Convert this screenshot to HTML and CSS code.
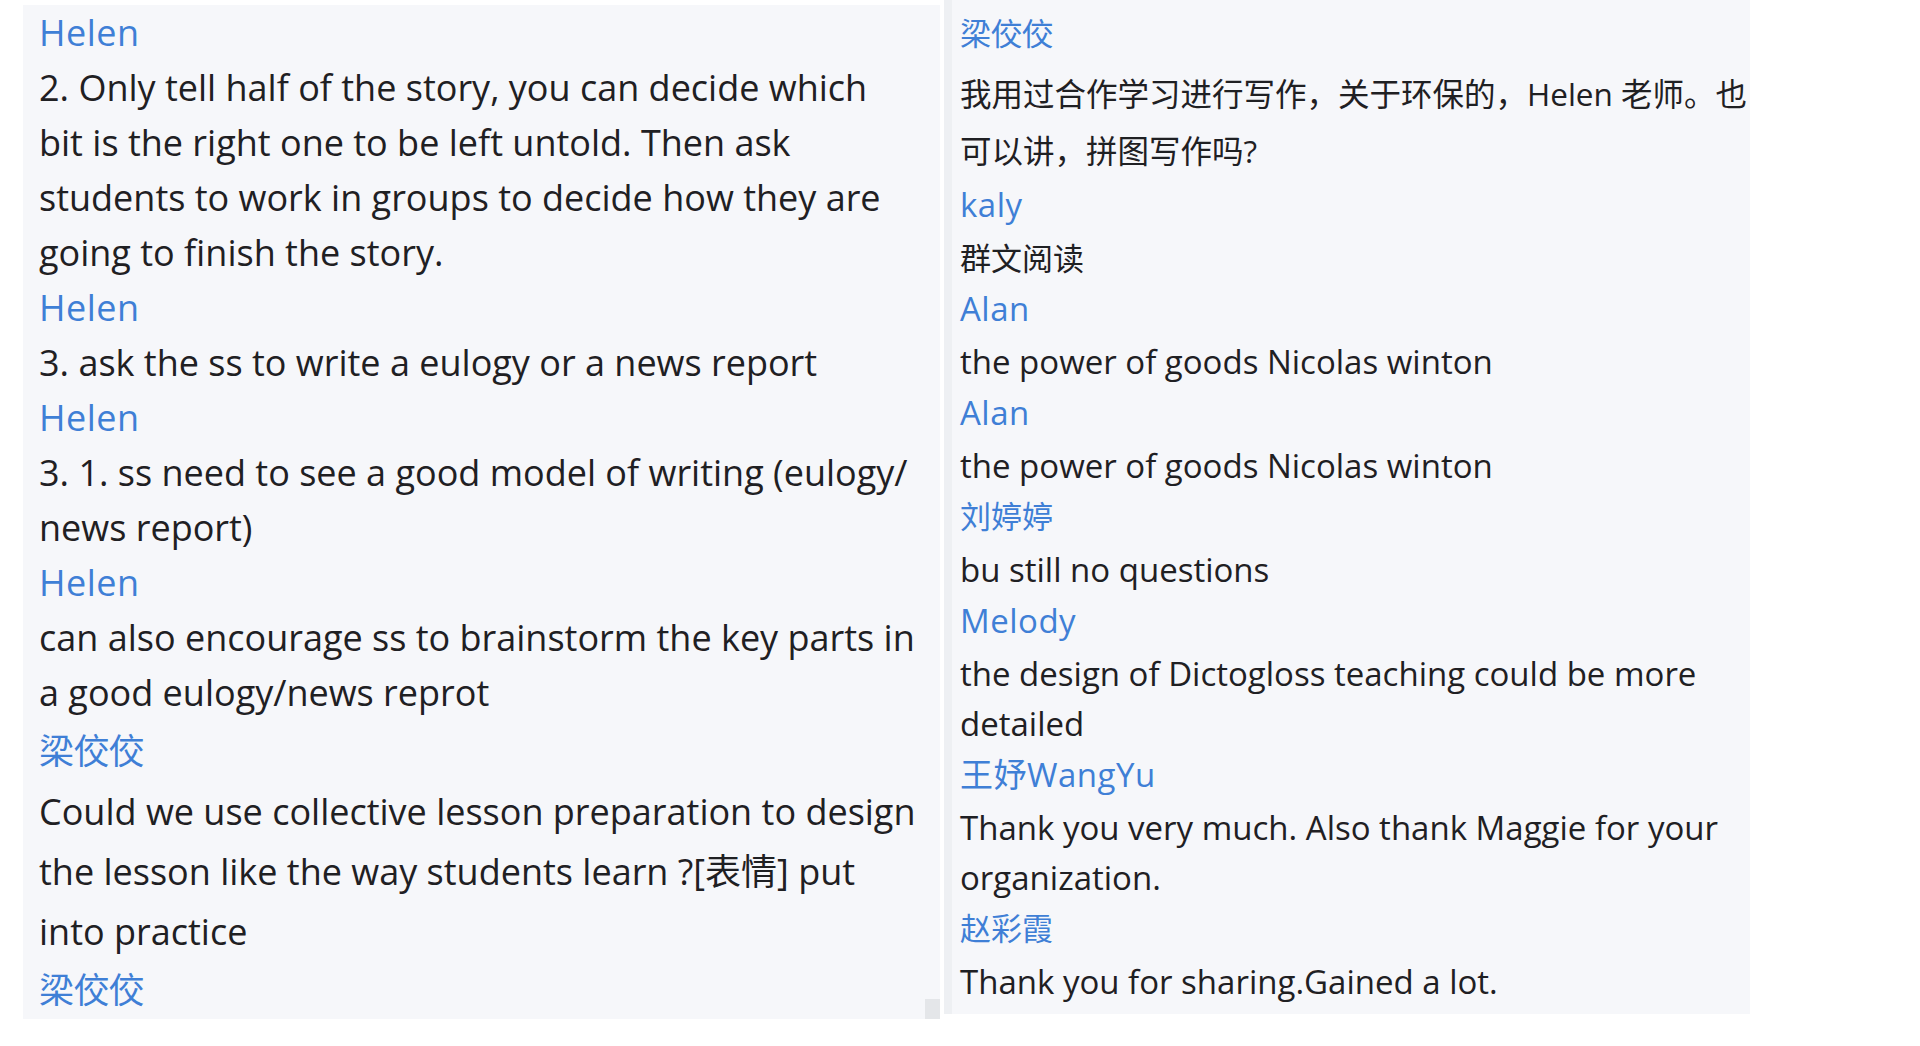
FILE: index.html
```html
<!DOCTYPE html>
<html lang="zh-CN">
<head>
<meta charset="utf-8">
<title>Chat</title>
<link rel="stylesheet" href="styles.css">
</head>
<body>
<div class="stage">
  <section class="chat chat-left">
    <div class="msg">
      <div class="name">Helen</div>
      <div class="text">2. Only tell half of the story, you can decide which<br>bit is the right one to be left untold. Then ask<br>students to work in groups to decide how they are<br>going to finish the story.</div>
    </div>
    <div class="msg">
      <div class="name">Helen</div>
      <div class="text">3. ask the ss to write a eulogy or a news report</div>
    </div>
    <div class="msg">
      <div class="name">Helen</div>
      <div class="text">3. 1. ss need to see a good model of writing (eulogy/<br>news report)</div>
    </div>
    <div class="msg">
      <div class="name">Helen</div>
      <div class="text">can also encourage ss to brainstorm the key parts in<br>a good eulogy/news reprot</div>
    </div>
    <div class="msg">
      <div class="name name-zh name-gap">梁佼佼</div>
      <div class="text text-tall">Could we use collective lesson preparation to design<br>the lesson like the way students learn ?[表情] put<br>into practice</div>
    </div>
    <div class="msg">
      <div class="name name-zh">梁佼佼</div>
    </div>
    <div class="scroll-thumb"></div>
  </section>
  <section class="chat chat-right">
    <div class="msg">
      <div class="name name-zh">梁佼佼</div>
      <div class="text text-cjk">我用过合作学习进行写作，关于环保的，Helen 老师。也<br>可以讲，拼图写作吗?</div>
    </div>
    <div class="msg">
      <div class="name">kaly</div>
      <div class="text text-zh">群文阅读</div>
    </div>
    <div class="msg">
      <div class="name">Alan</div>
      <div class="text">the power of goods Nicolas winton</div>
    </div>
    <div class="msg">
      <div class="name">Alan</div>
      <div class="text">the power of goods Nicolas winton</div>
    </div>
    <div class="msg">
      <div class="name name-zh">刘婷婷</div>
      <div class="text">bu still no questions</div>
    </div>
    <div class="msg">
      <div class="name">Melody</div>
      <div class="text">the design of Dictogloss teaching could be more<br>detailed</div>
    </div>
    <div class="msg">
      <div class="name">王妤WangYu</div>
      <div class="text">Thank you very much. Also thank Maggie for your<br>organization.</div>
    </div>
    <div class="msg">
      <div class="name name-zh">赵彩霞</div>
      <div class="text">Thank you for sharing.Gained a lot.</div>
    </div>
  </section>
</div>
</body>
</html>
```

FILE: styles.css
```css
html, body {
  margin: 0;
  padding: 0;
  background: #ffffff;
}

body {
  width: 1920px;
  height: 1046px;
  overflow: hidden;
  font-family: "Open Sans", "Noto Sans CJK SC", sans-serif;
  color: #1f2023;
}

.stage {
  display: flex;
  align-items: flex-start;
  gap: 4px;
  padding-left: 23px;
}

.chat {
  box-sizing: border-box;
  background: #f6f7fa;
  overflow: hidden;
  white-space: nowrap;
}

.chat-left {
  position: relative;
  width: 917px;
  height: 1014px;
  margin-top: 5px;
  padding-left: 16px;
}

.chat-right {
  width: 806px;
  height: 1014px;
  padding-left: 8px;
  padding-top: 8px;
  border-left: 8px solid #eef0f3;
}

.name {
  color: #3f7fd6;
  letter-spacing: 0.5px;
}

.chat-left .name {
  font-size: 36px;
  line-height: 55px;
}

.chat-left .name-zh {
  font-size: 35px;
  letter-spacing: 0;
}

.chat-left .name-gap {
  margin-top: 3px;
}

.chat-left .text {
  font-size: 36px;
  line-height: 55px;
}

.chat-left .text-tall {
  line-height: 60px;
  margin-top: 4px;
}

.chat-right .name {
  font-size: 33px;
  line-height: 51px;
}

.chat-right .name-zh {
  font-size: 31px;
  letter-spacing: 0;
}

.chat-right .text {
  font-size: 33px;
  line-height: 50px;
  margin-top: 3px;
}

.chat-right .text-zh {
  font-size: 31px;
}

.chat-right .text-cjk {
  font-size: 31.5px;
  line-height: 57px;
  margin-top: 6px;
}

.scroll-thumb {
  position: absolute;
  right: 0;
  bottom: 0;
  width: 15px;
  height: 20px;
  background: #e4e6e9;
}
```
